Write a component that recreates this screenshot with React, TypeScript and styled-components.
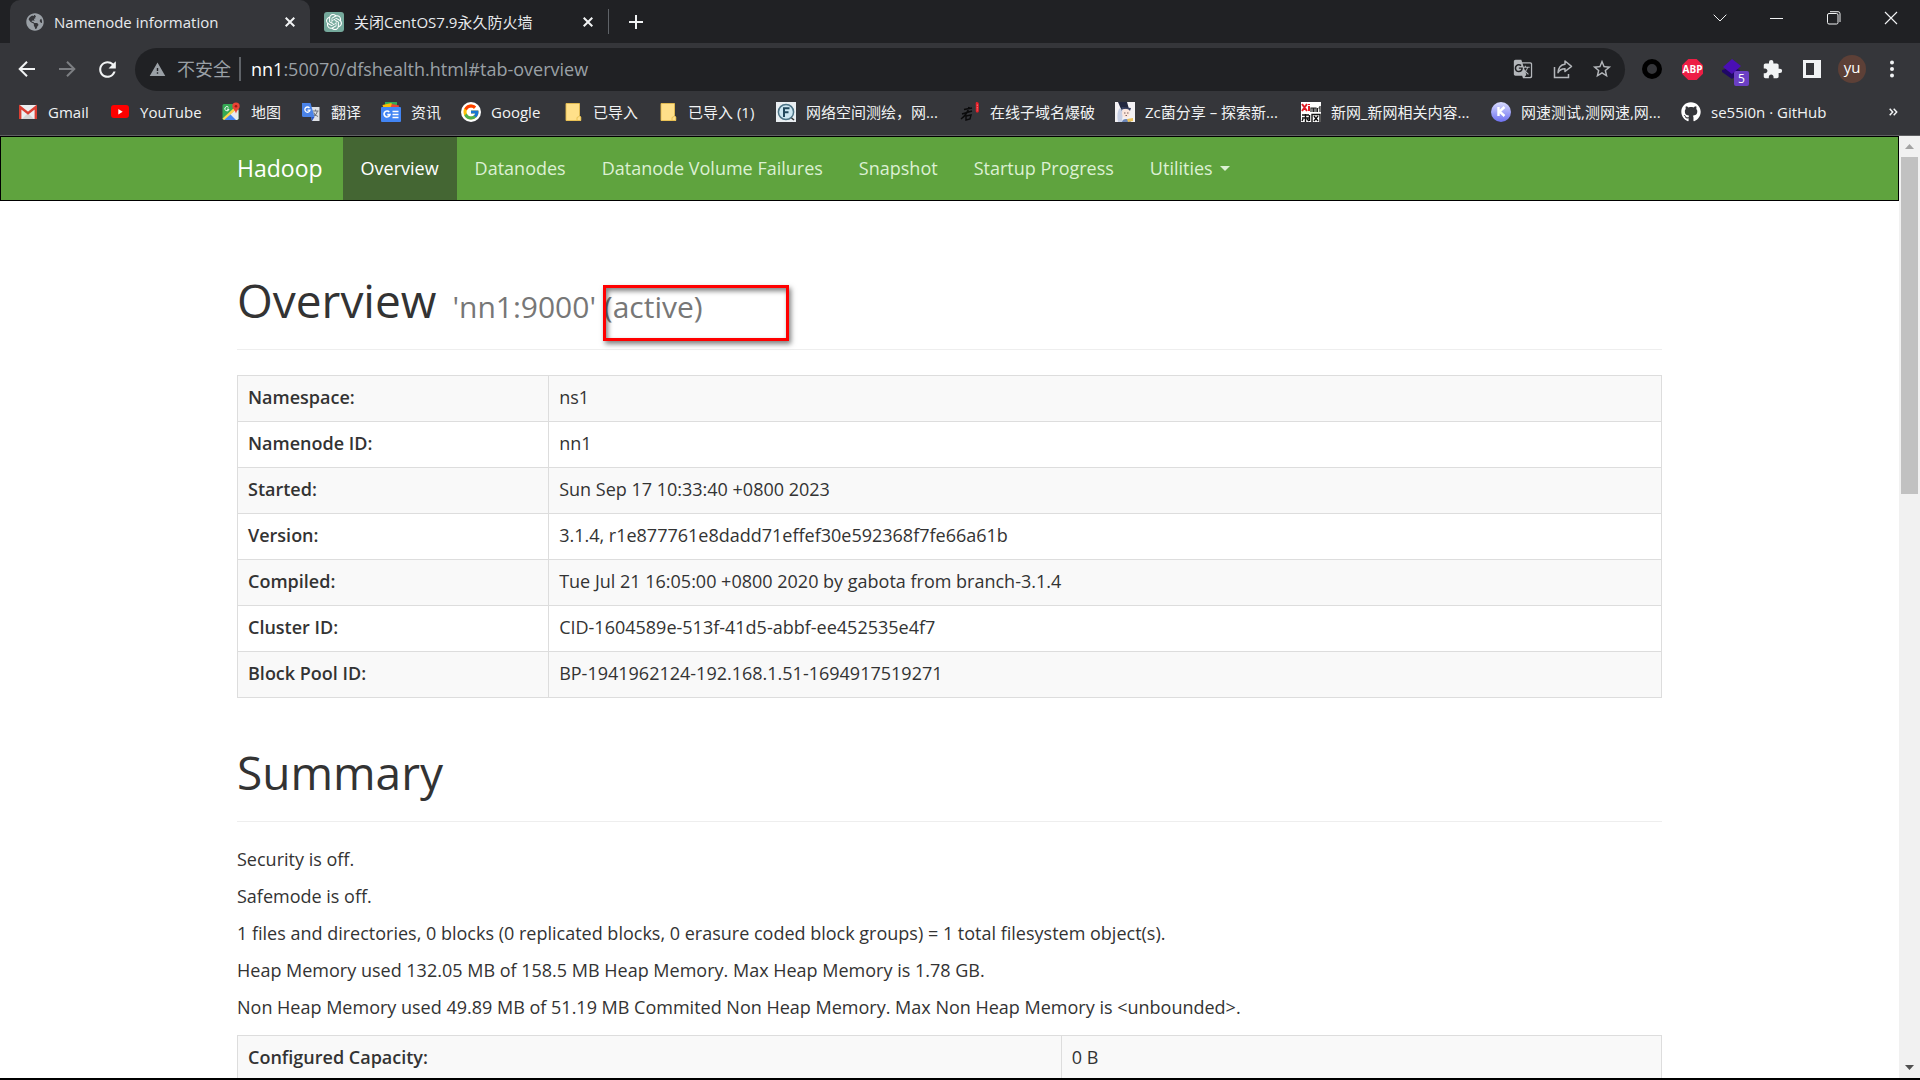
import React from "react";
import styled, { createGlobalStyle } from "styled-components";
import { FcGoogle } from "react-icons/fc";
import { FaGithub, FaGlobeAmericas } from "react-icons/fa";
import { SiOpenai } from "react-icons/si";
import { MdGTranslate, MdExtension, MdStarBorder, MdWarning, MdRefresh } from "react-icons/md";

const GlobalStyle = createGlobalStyle`
  * { box-sizing: border-box; }
  body {
    margin: 0;
    font-family: "Open Sans", "Noto Sans CJK SC", sans-serif;
    color: #333;
    background: #fff;
  }
  button, input { font-family: inherit; }
`;

const Window = styled.div`
  height: 100vh;
  display: flex;
  flex-direction: column;
  overflow: hidden;
  border-bottom: 2px solid #000;
`;

/* ---------- browser chrome ---------- */

const PlainButton = styled.button`
  display: flex;
  align-items: center;
  justify-content: center;
  flex: none;
  padding: 0;
  border: 0;
  background: none;
  color: #f1f3f4;
`;

const TabStrip = styled.div`
  display: flex;
  flex: none;
  height: 43px;
  padding: 0 1px 0 10px;
  background: #202124;
`;

const TabItem = styled.div<{ $active?: boolean }>`
  display: flex;
  align-items: center;
  width: ${(p) => (p.$active ? 300 : 298)}px;
  padding: 0 12px 0 ${(p) => (p.$active ? 16 : 14)}px;
  gap: 10px;
  border-radius: 10px 10px 0 0;
  background: ${(p) => (p.$active ? "#35363a" : "transparent")};
`;

const TabTitle = styled.span`
  flex: 1;
  font-size: 15px;
  line-height: 22px;
  color: #e8eaed;
  white-space: nowrap;
`;

const TabClose = styled(PlainButton)`
  width: 16px;
  height: 16px;
`;

const ChatTile = styled.span`
  display: flex;
  align-items: center;
  justify-content: center;
  width: 20px;
  height: 20px;
  border-radius: 3px;
  background: #75a99c;
  color: #fff;
`;

const TabDivider = styled.span`
  align-self: center;
  width: 1px;
  height: 25px;
  background: #5f6368;
`;

const NewTab = styled(PlainButton)`
  width: 54px;
`;

const WindowControls = styled.div`
  display: flex;
  margin-left: auto;
  height: 36px;
`;

const ControlButton = styled(PlainButton)`
  width: 57px;
`;

const Toolbar = styled.div`
  display: flex;
  align-items: center;
  flex: none;
  height: 52px;
  padding: 0 8px 0 7px;
  background: #35363a;
`;

const ToolButton = styled(PlainButton)<{ $dim?: boolean }>`
  width: 40px;
  height: 40px;
  color: ${(p) => (p.$dim ? "#7c7e82" : "#f1f3f4")};
`;

const AddressBar = styled.div`
  display: flex;
  align-items: center;
  flex: 1;
  height: 43px;
  margin: 0 7px 0 8px;
  padding: 0 9px 0 14px;
  border-radius: 22px;
  background: #202124;
  color: #9aa0a6;
  font-size: 18px;
`;

const Insecure = styled.span`
  margin-left: 11px;
  padding-right: 8px;
  border-right: 2px solid #5f6368;
  line-height: 24px;
`;

const Host = styled.label`
  margin-left: 10px;
  color: #fff;
`;

const UrlInput = styled.input`
  flex: 1;
  min-width: 0;
  padding: 0;
  border: 0;
  outline: 0;
  background: none;
  color: #9aa0a6;
  font-size: 18px;
`;

const AddressAction = styled(PlainButton)`
  width: 40px;
  height: 40px;
  color: #b4b7bb;
  &:last-child { width: 28px; margin-left: 5px; }
`;

const ExtensionBadge = styled.span`
  position: absolute;
  right: 3px;
  bottom: 3px;
  width: 15px;
  height: 15px;
  border-radius: 2px;
  background: #6b3fc4;
  color: #fff;
  font-size: 12px;
  line-height: 15px;
  text-align: center;
`;

const BadgedButton = styled(ToolButton)`
  position: relative;
`;

const Avatar = styled.span`
  width: 28px;
  height: 28px;
  border-radius: 50%;
  background: #5d4037;
  color: #fff;
  font-size: 15px;
  line-height: 24px;
  text-align: center;
`;

const BookmarkBar = styled.nav`
  display: flex;
  align-items: center;
  flex: none;
  height: 41px;
  padding: 0 18px 6px;
  gap: 20px;
  border-bottom: 1px solid #5f6063;
  background: #35363a;
`;

const Bookmark = styled.a`
  display: flex;
  align-items: center;
  gap: 10px;
  color: #f1f3f4;
  text-decoration: none;
  font-size: 15px;
  line-height: 22px;
  white-space: nowrap;
  svg { flex: none; }
`;

const BookmarkTitle = styled.span<{ $width: number }>`
  width: ${(p) => p.$width}px;
`;

const Overflow = styled(PlainButton)`
  margin-left: auto;
  width: 18px;
`;

/* ---------- page ---------- */

const Viewport = styled.div`
  display: flex;
  flex: 1;
  min-height: 0;
`;

const Page = styled.div`
  flex: 1;
  min-width: 0;
  overflow: hidden;
  font-size: 18px;
  line-height: 25px;
`;

const Container = styled.div`
  max-width: 1463px;
  margin: 0 auto;
  padding: 0 19px;
`;

const NavBar = styled.header`
  border: 1px solid #000;
  background: #5fa33e;
`;

const NavRow = styled(Container)`
  display: flex;
  height: 63px;
`;

const Brand = styled.a`
  display: flex;
  align-items: center;
  padding-right: 20px;
  color: #fff;
  font-size: 23px;
  text-decoration: none;
`;

const NavLink = styled.a<{ $active?: boolean }>`
  display: flex;
  align-items: center;
  gap: 7px;
  padding: 0 18px;
  color: ${(p) => (p.$active ? "#fff" : "#dcf0d3")};
  background: ${(p) => (p.$active ? "#446633" : "transparent")};
  text-decoration: none;
  white-space: nowrap;
`;

const PageHeader = styled.div<{ $top: number }>`
  margin: ${(p) => p.$top}px 0 25px;
  padding-bottom: 22px;
  border-bottom: 1px solid #eee;
`;

const Title = styled.h1`
  margin: 0;
  font-size: 46px;
  font-weight: 400;
  line-height: 54px;
`;

const Subtitle = styled.small`
  margin-left: 4px;
  color: #777;
  font-size: 30px;
  line-height: 30px;
`;

const Marked = styled.span`
  position: relative;
`;

const MarkerBox = styled.span`
  position: absolute;
  left: -1px;
  top: -1px;
  width: 186px;
  height: 56px;
  border: 3px solid #f00;
  box-shadow: 2px 3px 5px rgba(0, 0, 0, 0.5), inset 2px 3px 5px rgba(0, 0, 0, 0.5);
`;

const DataTable = styled.table`
  width: 100%;
  border-collapse: collapse;
  table-layout: fixed;
  tr:nth-child(odd) { background: #f9f9f9; }
  th, td {
    height: 46px;
    padding: 0 10px 2px;
    border: 1px solid #ddd;
    text-align: left;
  }
`;

const HeadCell = styled.th<{ $share: number }>`
  width: ${(p) => p.$share}%;
  font-weight: 600;
`;

const Facts = styled.div`
  display: flex;
  flex-direction: column;
  gap: 12px;
  padding-bottom: 15px;
`;

const Fact = styled.p`
  margin: 0;
`;

const ScrollTrack = styled.div`
  display: flex;
  flex-direction: column;
  flex: none;
  width: 21px;
  padding: 0 2px;
  background: #f1f1f1;
`;

const ScrollArrow = styled.span`
  display: flex;
  align-items: center;
  justify-content: center;
  height: 21px;
`;

const ScrollRail = styled.div`
  flex: 1;
`;

const ScrollThumb = styled.div`
  height: 37.4%;
  background: #c1c1c1;
`;

/* ---------- drawings ---------- */

const Cross = ({ size = 10, width = 2 }: { size?: number; width?: number }) => (
  <svg width={size} height={size} viewBox="0 0 10 10" stroke="currentColor" strokeWidth={width} fill="none">
    <path d="M.7.7l8.6 8.6M9.3.7L.7 9.3" />
  </svg>
);

const Arrow = ({ flip }: { flip?: boolean }) => (
  <svg width="18" height="18" viewBox="0 0 18 18" fill="none" stroke="currentColor" strokeWidth="2">
    <path d={flip ? "M1 9h15M9 1.7L16.3 9 9 16.3" : "M17 9H2M9 1.7L1.7 9 9 16.3"} />
  </svg>
);

const GmailIcon = () => (
  <svg width="20" height="20" viewBox="0 0 20 20">
    <rect x="1" y="3" width="18" height="14" rx="1.5" fill="#eceff1" />
    <path d="M4 17l6-6 6 6z" fill="#d5d5d5" />
    <path d="M2.2 17V5L10 11.2 17.8 5v12" fill="none" stroke="#d93f33" strokeWidth="2.4" />
  </svg>
);

const YouTubeIcon = () => (
  <svg width="20" height="20" viewBox="0 0 20 20">
    <rect x="1" y="3" width="18" height="13" rx="3" fill="#f00" />
    <path d="M8.3 7v5.4l4.4-2.7z" fill="#fff" />
  </svg>
);

const MapsIcon = () => (
  <svg width="20" height="20" viewBox="0 0 20 20">
    <rect x="1.5" y="2" width="16" height="16" rx="1.5" fill="#34a853" />
    <path d="M3 18L16 6l1.5 2v9L16 18z" fill="#e8eaed" />
    <path d="M3 18l6-6 6 6z" fill="#4285f4" />
    <path d="M1.5 16.5L14 5l2 2L3 18z" fill="#fbd54b" />
    <path d="M7.5 5.3A2.1 2.1 0 1 0 8 7.2H6" fill="none" stroke="#fff" strokeWidth="1" />
    <path d="M15 .5a3.7 3.7 0 0 1 3.7 3.7c0 2.4-3 4-3.7 7.3-.7-3.3-3.7-4.9-3.7-7.3A3.7 3.7 0 0 1 15 .5z" fill="#ea4335" />
    <circle cx="15" cy="4.2" r="1.3" fill="#9c1c14" />
  </svg>
);

const TranslateIcon = () => (
  <svg width="20" height="20" viewBox="0 0 20 20">
    <path d="M8 5h10.5v14H11z" fill="#dfe1e5" />
    <path d="M11.5 9h6M14.5 7.5V9M16.5 9c-.5 3-2.5 4.5-4 5.500M12.5 10.500c1 2 3 3.500 4.500 4" stroke="#6f7681" strokeWidth="1.1" fill="none" />
    <path d="M1 1h8.5l4 14H2.5A1.5 1.5 0 0 1 1 13.5z" fill="#4a83e8" />
    <path d="M10 15h3.5L11 19z" fill="#2a56c6" />
    <path d="M8.5 6A2.6 2.6 0 1 0 9 8.200H6.500" fill="none" stroke="#fff" strokeWidth="1.3" />
  </svg>
);

const NewsIcon = () => (
  <svg width="20" height="20" viewBox="0 0 20 20">
    <path d="M4 0h12v5H4z" fill="#34a853" />
    <path d="M1.5 3l9-2 1 5h-9z" fill="#fbbc04" />
    <path d="M11 2l7 1.500-.5 3H9z" fill="#ea4335" />
    <rect x="0" y="5" width="20" height="15" rx="1" fill="#4285f4" />
    <path d="M8.3 10A3 3 0 1 0 9 12.600H6.300M11.500 9.500h6M11.500 12.500h6M11.500 15.500h6" fill="none" stroke="#fff" strokeWidth="1.6" />
  </svg>
);

const GoogleIcon = () => (
  <svg width="20" height="20" viewBox="0 0 20 20">
    <circle cx="10" cy="10" r="10" fill="#fff" />
    <FcGoogle x="1" y="1" size={18} />
  </svg>
);

const FolderIcon = () => (
  <svg width="20" height="20" viewBox="0 0 20 20">
    <path d="M3 1.5h13.500v12.500l1.500 1v4H3z" fill="#ffe08a" />
    <path d="M3 1.5h13.500v12l1.300 1.500v3.500H14v-3l2-1" fill="none" stroke="#e6bd4f" strokeWidth=".9" />
    <path d="M3 1.5v17h14" fill="none" stroke="#e6bd4f" strokeWidth=".9" />
  </svg>
);

const FofaIcon = () => (
  <svg width="20" height="20" viewBox="0 0 20 20">
    <rect width="20" height="20" fill="#e9eef1" />
    <circle cx="10" cy="10" r="7.6" fill="#cde7f2" stroke="#4c7385" strokeWidth="1.5" />
    <path d="M8 15V6.300h5.500M8 10.300h4.500" fill="none" stroke="#22485c" strokeWidth="2" />
    <path d="M15.5 16l2.500 2" stroke="#333" strokeWidth="1.6" />
  </svg>
);

const BrushIcon = () => (
  <svg width="20" height="20" viewBox="0 0 20 20">
    <path d="M4 7.500l8-1.500M2 12l10-3M9 5c-1 5-4 9-8 12M6 14l5-1-1 4-4 1z" fill="none" stroke="#0b0b0c" strokeWidth="1.5" />
    <path d="M16.500 0c2 0 2.500 1 2.300 3v6c0 2-3 2-3 0V3c-.3-2 0-3 .7-3z" fill="#e8202a" />
    <path d="M17.300 2.500v6" stroke="#ff8a8a" strokeWidth=".8" strokeDasharray="1.5 1" />
  </svg>
);

const PortraitIcon = () => (
  <svg width="20" height="20" viewBox="0 0 20 20">
    <rect width="20" height="20" fill="#f4f2f4" />
    <path d="M3 0h9l2 7H6z" fill="#23283f" />
    <path d="M5 6c-3 3-3 9-2 14h4L8 9z" fill="#c7cfe4" />
    <ellipse cx="11" cy="11" rx="4" ry="4.5" fill="#fbe6dc" />
    <path d="M6 9c2-3 7-3 9 0l1-3-9-1z" fill="#3a4263" />
    <path d="M7 20c0-4 8-4 9 0z" fill="#6b86b8" />
    <path d="M12 17l6-1v3l-5 1z" fill="#ecc158" />
    <path d="M9 11h1.500M12 11h1.500M10.500 13.500h1.500" stroke="#5b4040" strokeWidth=".8" />
  </svg>
);

const XinnetIcon = () => (
  <svg width="20" height="20" viewBox="0 0 20 20">
    <rect width="20" height="20" fill="#fff" />
    <path d="M1 2l5 7M6 2L1 9M8 4v5M8 2v1" stroke="#e01b22" strokeWidth="2" fill="none" />
    <path d="M10 10V6h2v4M13 10V6h2v4M16.500 6v4M19 4v6M17.500 6h2" stroke="#222" strokeWidth="1.2" fill="none" />
    <path d="M1 13h7M1 16h7M4.500 12v8M2 17l-1 2M6 17l2 2M8.500 13v6M11 20v-7.500h8V20M13 14l4 5M17 14l-4 5" stroke="#111" strokeWidth="1.4" fill="none" />
  </svg>
);

const KIcon = () => (
  <svg width="20" height="20" viewBox="0 0 20 20">
    <defs>
      <linearGradient id="kball" x1="0" y1="0" x2="0" y2="1">
        <stop offset="0" stopColor="#d9dcff" />
        <stop offset="1" stopColor="#6d70f0" />
      </linearGradient>
    </defs>
    <circle cx="10" cy="10" r="10" fill="url(#kball)" />
    <path d="M7.500 5v9M13.500 5l-5 4.500 5 4.500" fill="none" stroke="#fff" strokeWidth="2.4" />
  </svg>
);

const bookmarks = [
  { title: "Gmail", width: 42, icon: <GmailIcon /> },
  { title: "YouTube", width: 61, icon: <YouTubeIcon /> },
  { title: "地图", width: 30, icon: <MapsIcon /> },
  { title: "翻译", width: 30, icon: <TranslateIcon /> },
  { title: "资讯", width: 30, icon: <NewsIcon /> },
  { title: "Google", width: 52, icon: <GoogleIcon /> },
  { title: "已导入", width: 45, icon: <FolderIcon /> },
  { title: "已导入 (1)", width: 68, icon: <FolderIcon /> },
  { title: "网络空间测绘，网...", width: 134, icon: <FofaIcon /> },
  { title: "在线子域名爆破", width: 105, icon: <BrushIcon /> },
  { title: "Zc菌分享 – 探索新...", width: 136, icon: <PortraitIcon /> },
  { title: "新网_新网相关内容...", width: 140, icon: <XinnetIcon /> },
  { title: "网速测试,测网速,网...", width: 140, icon: <KIcon /> },
  { title: "se55i0n · GitHub", width: 120, icon: <FaGithub size={20} color="#fff" /> },
];

const navItems = ["Overview", "Datanodes", "Datanode Volume Failures", "Snapshot", "Startup Progress"];

const overview = [
  ["Namespace:", "ns1"],
  ["Namenode ID:", "nn1"],
  ["Started:", "Sun Sep 17 10:33:40 +0800 2023"],
  ["Version:", "3.1.4, r1e877761e8dadd71effef30e592368f7fe66a61b"],
  ["Compiled:", "Tue Jul 21 16:05:00 +0800 2020 by gabota from branch-3.1.4"],
  ["Cluster ID:", "CID-1604589e-513f-41d5-abbf-ee452535e4f7"],
  ["Block Pool ID:", "BP-1941962124-192.168.1.51-1694917519271"],
];

const facts = [
  "Security is off.",
  "Safemode is off.",
  "1 files and directories, 0 blocks (0 replicated blocks, 0 erasure coded block groups) = 1 total filesystem object(s).",
  "Heap Memory used 132.05 MB of 158.5 MB Heap Memory. Max Heap Memory is 1.78 GB.",
  "Non Heap Memory used 49.89 MB of 51.19 MB Commited Non Heap Memory. Max Non Heap Memory is <unbounded>.",
];

function BrowserTabs() {
  return (
    <TabStrip>
      <TabItem $active>
        <FaGlobeAmericas size={18} color="#9aa0a6" />
        <TabTitle>Namenode information</TabTitle>
        <TabClose aria-label="Close tab"><Cross /></TabClose>
      </TabItem>
      <TabItem>
        <ChatTile><SiOpenai size={16} /></ChatTile>
        <TabTitle>关闭CentOS7.9永久防火墙</TabTitle>
        <TabClose aria-label="Close tab"><Cross /></TabClose>
      </TabItem>
      <TabDivider />
      <NewTab aria-label="New tab">
        <svg width="16" height="16" viewBox="0 0 16 16" stroke="currentColor" strokeWidth="2">
          <path d="M8 1v14M1 8h14" />
        </svg>
      </NewTab>
      <WindowControls>
        <ControlButton aria-label="Search tabs">
          <svg width="14" height="8" viewBox="0 0 14 8" fill="none" stroke="currentColor">
            <path d="M.7.7L7 7 13.3.7" />
          </svg>
        </ControlButton>
        <ControlButton aria-label="Minimize">
          <svg width="13" height="2" viewBox="0 0 13 2"><path d="M0 1h13v1H0z" fill="currentColor" /></svg>
        </ControlButton>
        <ControlButton aria-label="Restore">
          <svg width="14" height="14" viewBox="0 0 14 14" fill="none" stroke="currentColor">
            <rect x=".5" y="2.5" width="10.5" height="10.5" rx="1.5" />
            <path d="M3 .7h8a2 2 0 0 1 2 2V11" />
          </svg>
        </ControlButton>
        <ControlButton aria-label="Close"><Cross size={14} width={0.8} /></ControlButton>
      </WindowControls>
    </TabStrip>
  );
}

function BrowserToolbar() {
  return (
    <Toolbar>
      <ToolButton aria-label="Back"><Arrow /></ToolButton>
      <ToolButton aria-label="Forward" $dim><Arrow flip /></ToolButton>
      <ToolButton aria-label="Reload"><MdRefresh size={25} /></ToolButton>
      <AddressBar>
        <MdWarning size={17} />
        <Insecure>不安全</Insecure>
        <Host htmlFor="url">nn1</Host>
        <UrlInput id="url" defaultValue=":50070/dfshealth.html#tab-overview" />
        <AddressAction aria-label="Translate"><MdGTranslate size={20} /></AddressAction>
        <AddressAction aria-label="Share">
          <svg width="20" height="20" viewBox="0 0 20 20" fill="none" stroke="currentColor" strokeWidth="1.5">
            <path d="M1.5 8v10.500h14V15" />
            <path d="M12 2l6.500 5.300L12 12.500V9.700c-3.500 0-5.500 1-7 4 .3-4.500 2.500-8 7-8.500z" strokeLinejoin="round" />
          </svg>
        </AddressAction>
        <AddressAction aria-label="Bookmark"><MdStarBorder size={22} /></AddressAction>
      </AddressBar>
      <ToolButton aria-label="Ring extension">
        <svg width="20" height="20" viewBox="0 0 20 20"><circle cx="10" cy="10" r="7.5" fill="#35363a" stroke="#000" strokeWidth="5" /></svg>
      </ToolButton>
      <ToolButton aria-label="Ad blocker">
        <svg width="21" height="21" viewBox="0 0 21 21">
          <path d="M6.300 0h8.400L21 6.300v8.400L14.700 21H6.300L0 14.700V6.300z" fill="#ed1e45" />
          <text x="10.5" y="14" fontSize="10" fontWeight="700" fill="#fff" textAnchor="middle">ABP</text>
        </svg>
      </ToolButton>
      <BadgedButton aria-label="Layers extension">
        <svg width="22" height="22" viewBox="0 0 22 22">
          <path d="M1 12l10-3 8 3v3l-8 6-10-7z" fill="#1f0866" />
          <path d="M11 1l9 7-9 8-9-7z" fill="#4a0fb5" />
        </svg>
        <ExtensionBadge>5</ExtensionBadge>
      </BadgedButton>
      <ToolButton aria-label="Extensions"><MdExtension size={21} /></ToolButton>
      <ToolButton aria-label="Side panel">
        <svg width="18" height="18" viewBox="0 0 18 18"><path d="M0 0h18v18H0zM3 3v12h8V3z" fill="#f1f3f4" fillRule="evenodd" /></svg>
      </ToolButton>
      <ToolButton aria-label="Profile"><Avatar>yu</Avatar></ToolButton>
      <ToolButton aria-label="Menu">
        <svg width="4" height="18" viewBox="0 0 4 18" fill="currentColor">
          <circle cx="2" cy="2.5" r="2" /><circle cx="2" cy="9" r="2" /><circle cx="2" cy="15.5" r="2" />
        </svg>
      </ToolButton>
    </Toolbar>
  );
}

export default function App() {
  return (
    <Window>
      <GlobalStyle />
      <BrowserTabs />
      <BrowserToolbar />
      <BookmarkBar>
        {bookmarks.map((b) => (
          <Bookmark href="#" key={b.title}>
            {b.icon}
            <BookmarkTitle $width={b.width}>{b.title}</BookmarkTitle>
          </Bookmark>
        ))}
        <Overflow aria-label="More bookmarks">
          <svg width="9" height="8" viewBox="0 0 9 8" fill="none" stroke="currentColor" strokeWidth="1.5">
            <path d="M.7.7L3.700 4l-3 3.300M4.700.7l3 3.300-3 3.300" />
          </svg>
        </Overflow>
      </BookmarkBar>
      <Viewport>
        <Page>
          <NavBar>
            <NavRow>
              <Brand href="#">Hadoop</Brand>
              {navItems.map((item, i) => (
                <NavLink href="#" key={item} $active={i === 0}>{item}</NavLink>
              ))}
              <NavLink href="#">
                Utilities
                <svg width="10" height="5" viewBox="0 0 10 5"><path d="M0 0h10L5 5z" fill="currentColor" /></svg>
              </NavLink>
            </NavRow>
          </NavBar>
          <Container>
            <PageHeader $top={72}>
              <Title>
                Overview <Subtitle>'nn1:9000' <Marked>(active)<MarkerBox /></Marked></Subtitle>
              </Title>
            </PageHeader>
            <DataTable>
              <tbody>
                {overview.map(([name, value]) => (
                  <tr key={name}>
                    <HeadCell scope="row" $share={21.85}>{name}</HeadCell>
                    <td>{value}</td>
                  </tr>
                ))}
              </tbody>
            </DataTable>
            <PageHeader $top={47}>
              <Title>Summary</Title>
            </PageHeader>
            <Facts>
              {facts.map((f) => <Fact key={f}>{f}</Fact>)}
            </Facts>
            <DataTable>
              <tbody>
                <tr>
                  <HeadCell scope="row" $share={57.85}>Configured Capacity:</HeadCell>
                  <td>0 B</td>
                </tr>
              </tbody>
            </DataTable>
          </Container>
        </Page>
        <ScrollTrack>
          <ScrollArrow>
            <svg width="9" height="5" viewBox="0 0 9 5"><path d="M0 5h9L4.500 0z" fill="#a3a3a3" /></svg>
          </ScrollArrow>
          <ScrollRail><ScrollThumb /></ScrollRail>
          <ScrollArrow>
            <svg width="9" height="5" viewBox="0 0 9 5"><path d="M0 0h9L4.500 5z" fill="#505050" /></svg>
          </ScrollArrow>
        </ScrollTrack>
      </Viewport>
    </Window>
  );
}
